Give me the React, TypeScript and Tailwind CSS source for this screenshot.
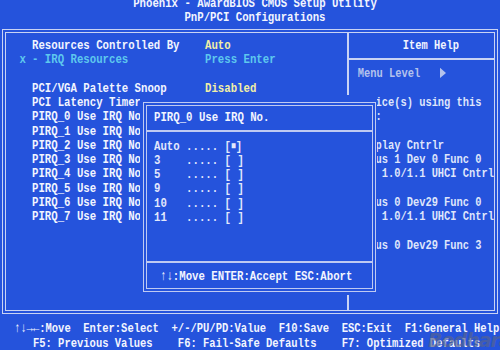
import React from 'react';

const MONO = { fontFamily: '"Liberation Mono", "DejaVu Sans Mono", monospace' };

type Item = { mark?: string; label: string; value?: string; tone?: 'on' | 'off' };

const items: Item[] = [
  { label: 'Resources Controlled By', value: 'Auto', tone: 'on' },
  { mark: 'x', label: '- IRQ Resources', value: 'Press Enter', tone: 'off' },
  { label: '' },
  { label: 'PCI/VGA Palette Snoop', value: 'Disabled', tone: 'on' },
  { label: 'PCI Latency Timer' },
  ...[0, 1, 2, 3, 4, 5, 6, 7].map((n) => ({ label: `PIRQ_${n} Use IRQ No` })),
];

const helpLines = [
  'Device(s) using this',
  'IRQ:',
  '',
  'Display Cntrlr',
  '  Bus 1 Dev 0 Func 0',
  'USB 1.0/1.1 UHCI Cntrl',
  '',
  '  Bus 0 Dev29 Func 0',
  'USB 1.0/1.1 UHCI Cntrl',
  '',
  '  Bus 0 Dev29 Func 3',
];

const irqOptions = [
  { name: 'Auto', checked: true },
  { name: '3' },
  { name: '5' },
  { name: '9' },
  { name: '10' },
  { name: '11' },
];

// text mode cells: glyphs are stretched vertically like the VGA 8x16 font
const Row: React.FC<{ children?: React.ReactNode; className?: string }> = ({ children, className = '' }) => (
  <div className={`h-[14.3px] leading-[14.3px] whitespace-pre scale-y-[1.28] ${className}`}>{children}</div>
);

const Rule: React.FC<{ color: string }> = ({ color }) => (
  <div className="h-[14.3px] flex items-center">
    <div className={`h-[2px] w-full ${color}`} />
  </div>
);

const App: React.FC = () => {
  return (
    <div
      className="relative w-[500px] h-[350px] overflow-hidden bg-[#2553dc] text-[#f2f5ff] font-bold flex flex-col"
      style={MONO}
    >
      {/* Title */}
      <div className="h-[29px] text-[10.7px] text-center pl-[10px]">
        <div className="-mt-[4px]">
          <Row>Phoenix - AwardBIOS CMOS Setup Utility</Row>
          <Row>PnP/PCI Configurations</Row>
        </div>
      </div>

      {/* Main frame */}
      <div className="mx-[2px] h-[288px] border-[4px] border-double border-[#c9d3f4] flex">
        {/* Settings list */}
        <div className="w-[342px] pt-[5px] pl-[13.5px] text-[10.7px]">
          {items.map((it, i) => (
            <Row key={i} className="flex">
              <span className="w-[12.5px] text-[#5ec8ee]">{it.mark ?? ''}</span>
              <span className={`w-[173px] ${it.tone === 'off' ? 'text-[#5ec8ee]' : ''}`}>{it.label}</span>
              {it.value && (
                <span className={it.tone === 'off' ? 'text-[#5ec8ee]' : 'text-[#f1efa6]'}>{it.value}</span>
              )}
            </Row>
          ))}
        </div>

        <div className="w-[2px] bg-[#c9d3f4]" />

        {/* Item help */}
        <div className="flex-1 pt-[5px] text-[10.4px]">
          <Row className="pl-[54px]">Item Help</Row>
          <Rule color="bg-[#c9d3f4]" />
          <Row className="pl-[9px] flex items-center text-[#b4c2ec]">
            <span>Menu Level</span>
            <svg className="ml-[20px]" width="6" height="8" viewBox="0 0 6 8">
              <path d="M0 0 L6 4 L0 8 Z" fill="#b4c2ec" />
            </svg>
          </Row>
          <Row />
          <div className="pl-[8px] text-[#dfe5fb]">
            {helpLines.map((l, i) => (
              <Row key={i}>{l}</Row>
            ))}
          </div>
        </div>
      </div>

      {/* Key legend */}
      <div className="pt-[7px] pl-[14px] text-[10.5px]">
        <Row>↑↓→←:Move  Enter:Select  +/-/PU/PD:Value  F10:Save  ESC:Exit  F1:General Help</Row>
        <Row>   F5: Previous Values    F6: Fail-Safe Defaults    F7: Optimized Defaults</Row>
      </div>

      {/* IRQ popup */}
      <div className="absolute left-[140px] top-[95px] w-[237px] h-[200px] bg-[#2553dc]">
        <div className="mt-[7px] ml-[3px] mr-[1px] h-[190px] border-[4px] border-double border-[#bfcaf2] flex flex-col text-[10.7px]">
          <div className="pt-[4px] pl-[7px]">
            <Row>PIRQ_0 Use IRQ No.</Row>
          </div>
          <Rule color="bg-[#bfcaf2]" />
          <div className="pl-[7px] text-[#e2e8fc]">
            {irqOptions.map((o) => (
              <Row key={o.name}>
                {o.name.padEnd(5, ' ')}..... [{o.checked ? <span className="text-[8px] align-[1px]">■</span> : ' '}]
              </Row>
            ))}
          </div>
          <div className="flex-1" />
          <Rule color="bg-[#bfcaf2]" />
          <Row className="pl-[13px] mb-[5px]">↑↓:Move ENTER:Accept ESC:Abort</Row>
        </div>
      </div>

      {/* Watermark */}
      <div
        className="absolute left-[428px] top-[326px] text-[19px] italic font-bold text-[#56638f]/70 tracking-[-1px]"
        style={{ fontFamily: '"DejaVu Sans", sans-serif' }}
      >
        Bodhara
      </div>
    </div>
  );
};

export default App;
